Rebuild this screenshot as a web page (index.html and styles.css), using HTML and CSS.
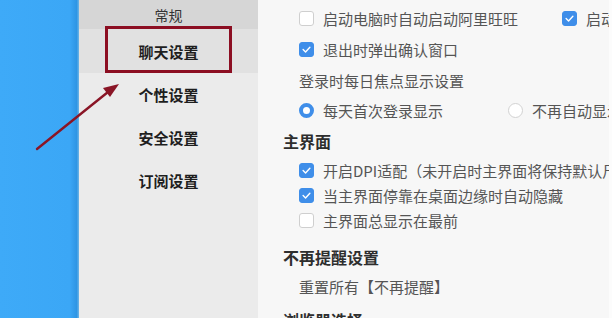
FILE: index.html
```html
<!DOCTYPE html>
<html lang="zh-CN">
<head>
<meta charset="utf-8">
<title>聊天设置</title>
<link rel="stylesheet" href="styles.css">
</head>
<body>
<div class="app">
  <div class="desk"></div>
  <nav class="sidebar">
    <div class="side-head">常规</div>
    <div class="side-item active">聊天设置</div>
    <div class="side-item">个性设置</div>
    <div class="side-item">安全设置</div>
    <div class="side-item">订阅设置</div>
  </nav>
  <main class="content">
    <div class="row r1">
      <label class="opt w1"><span class="cb"></span>启动电脑时自动启动阿里旺旺</label>
      <label class="opt"><span class="cb on"><svg viewBox="0 0 15 15"><path d="M3.6 7.6 L6.4 10.3 L11.4 4.8"/></svg></span>启动</label>
    </div>
    <div class="row r2">
      <label class="opt"><span class="cb on"><svg viewBox="0 0 15 15"><path d="M3.6 7.6 L6.4 10.3 L11.4 4.8"/></svg></span>退出时弹出确认窗口</label>
    </div>
    <div class="row r3 sub">登录时每日焦点显示设置</div>
    <div class="row r4">
      <label class="opt w2"><span class="rd on"></span>每天首次登录显示</label>
      <label class="opt"><span class="rd"></span>不再自动显示</label>
    </div>
    <h3 class="head h1">主界面</h3>
    <div class="row r5">
      <label class="opt"><span class="cb on"><svg viewBox="0 0 15 15"><path d="M3.6 7.6 L6.4 10.3 L11.4 4.8"/></svg></span>开启DPI适配（未开启时主界面将保持默认尺寸）</label>
    </div>
    <div class="row r6">
      <label class="opt"><span class="cb on"><svg viewBox="0 0 15 15"><path d="M3.6 7.6 L6.4 10.3 L11.4 4.8"/></svg></span>当主界面停靠在桌面边缘时自动隐藏</label>
    </div>
    <div class="row r7">
      <label class="opt"><span class="cb"></span>主界面总显示在最前</label>
    </div>
    <h3 class="head h2">不再提醒设置</h3>
    <div class="row r8 sub">重置所有【不再提醒】</div>
    <h3 class="head h3">浏览器选择</h3>
  </main>
  <div class="mark"></div>
  <svg class="arrow" viewBox="0 0 612 318" width="612" height="318">
    <line x1="37" y1="149" x2="108" y2="92"/>
    <polygon points="119,84 103,88 110,97"/>
  </svg>
</div>
</body>
</html>
```
FILE: styles.css
```css
* { box-sizing: border-box; }
html, body { margin: 0; padding: 0; }
body {
  width: 612px;
  height: 318px;
  overflow: hidden;
  font-family: "Noto Sans CJK SC", "Noto Sans", sans-serif;
  background: #f7f7f7;
}
.app {
  position: relative;
  display: flex;
  width: 612px;
  height: 318px;
}
.desk {
  width: 79px;
  flex: none;
  background: linear-gradient(to right, #3eaaf8 0%, #3ba7f6 88%, #2e95e4 97%, #6fb6e6 100%);
}
.sidebar {
  width: 179px;
  flex: none;
  background: #ebebeb;
  display: flex;
  flex-direction: column;
}
.side-head {
  height: 29px;
  background: #d6d6d6;
  color: #333;
  font-size: 14px;
  display: flex;
  align-items: center;
  justify-content: center;
  padding-left: 0;
}
.side-item {
  height: 43px;
  display: flex;
  align-items: center;
  justify-content: center;
  font-size: 15px;
  font-weight: bold;
  color: #1e1e1e;
  padding-right: 0;
}
.side-item.active {
  height: 44px;
  background: #e1e1e1;
}
.content {
  flex: 1;
  padding: 3px 0 0 25px;
  background: #f7f7f7;
  border-right: 3px solid #fcfcfc;
  font-size: 15px;
  color: #555;
  overflow: hidden;
  white-space: nowrap;
}
.row {
  display: flex;
  align-items: center;
  padding-left: 16px;
}
.r1 { height: 31px; }
.r2 { height: 31px; }
.r3 { height: 30px; }
.r4 { height: 30px; }
.r5 { height: 26px; }
.r6 { height: 25px; }
.r7 { height: 24px; }
.r8 { height: 32px; }
.opt {
  display: flex;
  align-items: center;
  gap: 9px;
  flex: none;
}
.w1 { width: 263px; }
.w2 { width: 209px; }
.cb {
  width: 15px;
  height: 15px;
  border: 1px solid #cfcfcf;
  border-radius: 3px;
  background: #fff;
  flex: none;
  display: flex;
}
.cb.on {
  background: #3f8ee9;
  border-color: #3f8ee9;
}
.cb svg {
  width: 13px;
  height: 13px;
  fill: none;
  stroke: #fff;
  stroke-width: 1.6;
  stroke-linecap: round;
  stroke-linejoin: round;
}
.rd {
  width: 15px;
  height: 15px;
  border-radius: 50%;
  border: 1px solid #d2d2d2;
  background: #fff;
  flex: none;
}
.rd.on {
  border: 4.5px solid #3f8ee9;
}
.head {
  margin: 0;
  font-size: 16px;
  font-weight: bold;
  color: #2e2e2e;
  display: flex;
  align-items: center;
}
.h1 { height: 32px; }
.h2 { height: 26px; margin-top: 12px; }
.h3 { height: 28px; margin-top: 4px; }
.mark {
  position: absolute;
  left: 105px;
  top: 26px;
  width: 127px;
  height: 47px;
  border: 3px solid #8c0e22;
}
.arrow {
  position: absolute;
  left: 0;
  top: 0;
  pointer-events: none;
}
.arrow line {
  stroke: #8a1526;
  stroke-width: 2.4;
  stroke-linecap: round;
}
.arrow polygon {
  fill: #8a1526;
}
```
